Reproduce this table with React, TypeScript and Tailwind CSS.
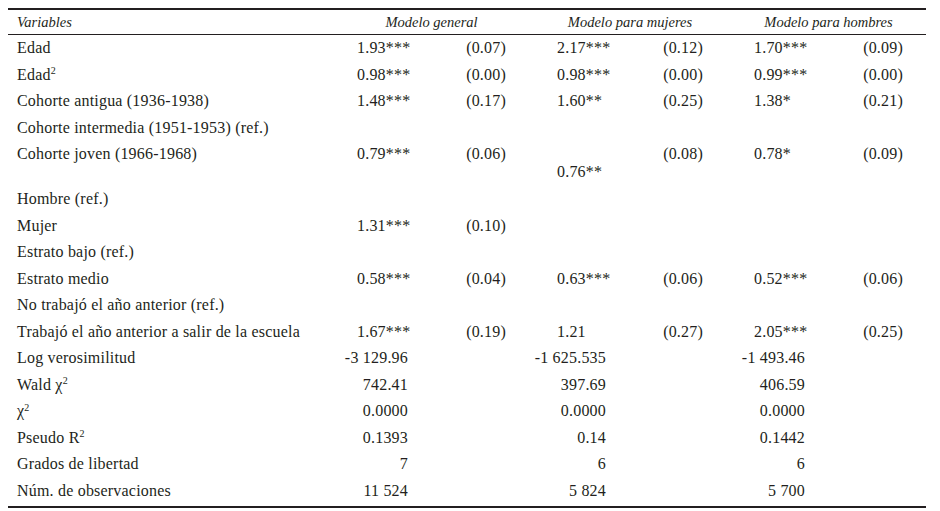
import React from "react";

type Coef = { b: string; se?: string };
type Row = {
  label: React.ReactNode;
  cells?: (Coef | null)[];
  stats?: string[];
  tall?: boolean;
};

const sup = (t: string) => <sup className="text-[10px] -top-[0.35em]">{t}</sup>;

const rows: Row[] = [
  { label: "Edad", cells: [{ b: "1.93***", se: "(0.07)" }, { b: "2.17***", se: "(0.12)" }, { b: "1.70***", se: "(0.09)" }] },
  { label: <>Edad{sup("2")}</>, cells: [{ b: "0.98***", se: "(0.00)" }, { b: "0.98***", se: "(0.00)" }, { b: "0.99***", se: "(0.00)" }] },
  { label: "Cohorte antigua (1936-1938)", cells: [{ b: "1.48***", se: "(0.17)" }, { b: "1.60**", se: "(0.25)" }, { b: "1.38*", se: "(0.21)" }] },
  { label: "Cohorte intermedia (1951-1953) (ref.)" },
  { label: "Cohorte joven (1966-1968)", tall: true, cells: [{ b: "0.79***", se: "(0.06)" }, { b: "0.76**", se: "(0.08)" }, { b: "0.78*", se: "(0.09)" }] },
  { label: "Hombre (ref.)" },
  { label: "Mujer", cells: [{ b: "1.31***", se: "(0.10)" }, null, null] },
  { label: "Estrato bajo (ref.)" },
  { label: "Estrato medio", cells: [{ b: "0.58***", se: "(0.04)" }, { b: "0.63***", se: "(0.06)" }, { b: "0.52***", se: "(0.06)" }] },
  { label: "No trabajó el año anterior (ref.)" },
  { label: "Trabajó el año anterior a salir de la escuela", cells: [{ b: "1.67***", se: "(0.19)" }, { b: "1.21", se: "(0.27)" }, { b: "2.05***", se: "(0.25)" }] },
  { label: "Log verosimilitud", stats: ["-3 129.96", "-1 625.535", "-1 493.46"] },
  { label: <>Wald χ{sup("2")}</>, stats: ["742.41", "397.69", "406.59"] },
  { label: <>χ{sup("2")}</>, stats: ["0.0000", "0.0000", "0.0000"] },
  { label: <>Pseudo R{sup("2")}</>, stats: ["0.1393", "0.14", "0.1442"] },
  { label: "Grados de libertad", stats: ["7", "6", "6"] },
  { label: "Núm. de observaciones", stats: ["11 524", "5 824", "5 700"] },
];

const groupW = ["w-[149px]", "w-[146px]", "w-[149px]"];
const statW = ["w-[51px]", "w-[49px]", "w-[51px]"];
const gapAfter = ["mr-[51px]", "mr-[51px]", ""];
const headers = ["Modelo general", "Modelo para mujeres", "Modelo para hombres"];

export default function App() {
  return (
    <div className="min-h-screen bg-white pt-[8px] pl-[8px]">
      <div className="w-[918px] font-['Liberation_Serif','Times_New_Roman',serif] text-[16px] tracking-[0.2px] text-[#231f20] whitespace-pre">
        <div className="flex h-[27px] items-center border-t-2 border-b border-[#231f20] text-[14.5px] tracking-normal italic">
          <div className="w-[349px] pl-[9px] pt-[1px]">Variables</div>
          {headers.map((h, i) => (
            <div key={h} className={`${groupW[i]} ${gapAfter[i]} pt-[1px] text-center`}>
              {h}
            </div>
          ))}
        </div>

        {rows.map((r, ri) => (
          <div key={ri} className={`flex items-start ${r.tall ? "h-[45px]" : "h-[26.5px]"}`}>
            <div className="w-[349px] h-[26.5px] pl-[9px] flex items-center">{r.label}</div>
            {[0, 1, 2].map((g) => {
              const c = r.cells?.[g];
              const s = r.stats?.[g];
              return (
                <div key={g} className={`${groupW[g]} ${gapAfter[g]} flex justify-between`}>
                  {c ? (
                    <>
                      <div className={`h-[26.5px] flex items-center ${r.tall && g === 1 ? "mt-[18px]" : ""}`}>
                        {c.b}
                      </div>
                      <div className="h-[26.5px] flex items-center">{c.se}</div>
                    </>
                  ) : s ? (
                    <div className={`${statW[g]} h-[26.5px] flex items-center justify-end`}>{s}</div>
                  ) : null}
                </div>
              );
            })}
          </div>
        ))}

        <div className="h-[2px] border-b-2 border-[#231f20] box-content" />
      </div>
    </div>
  );
}
